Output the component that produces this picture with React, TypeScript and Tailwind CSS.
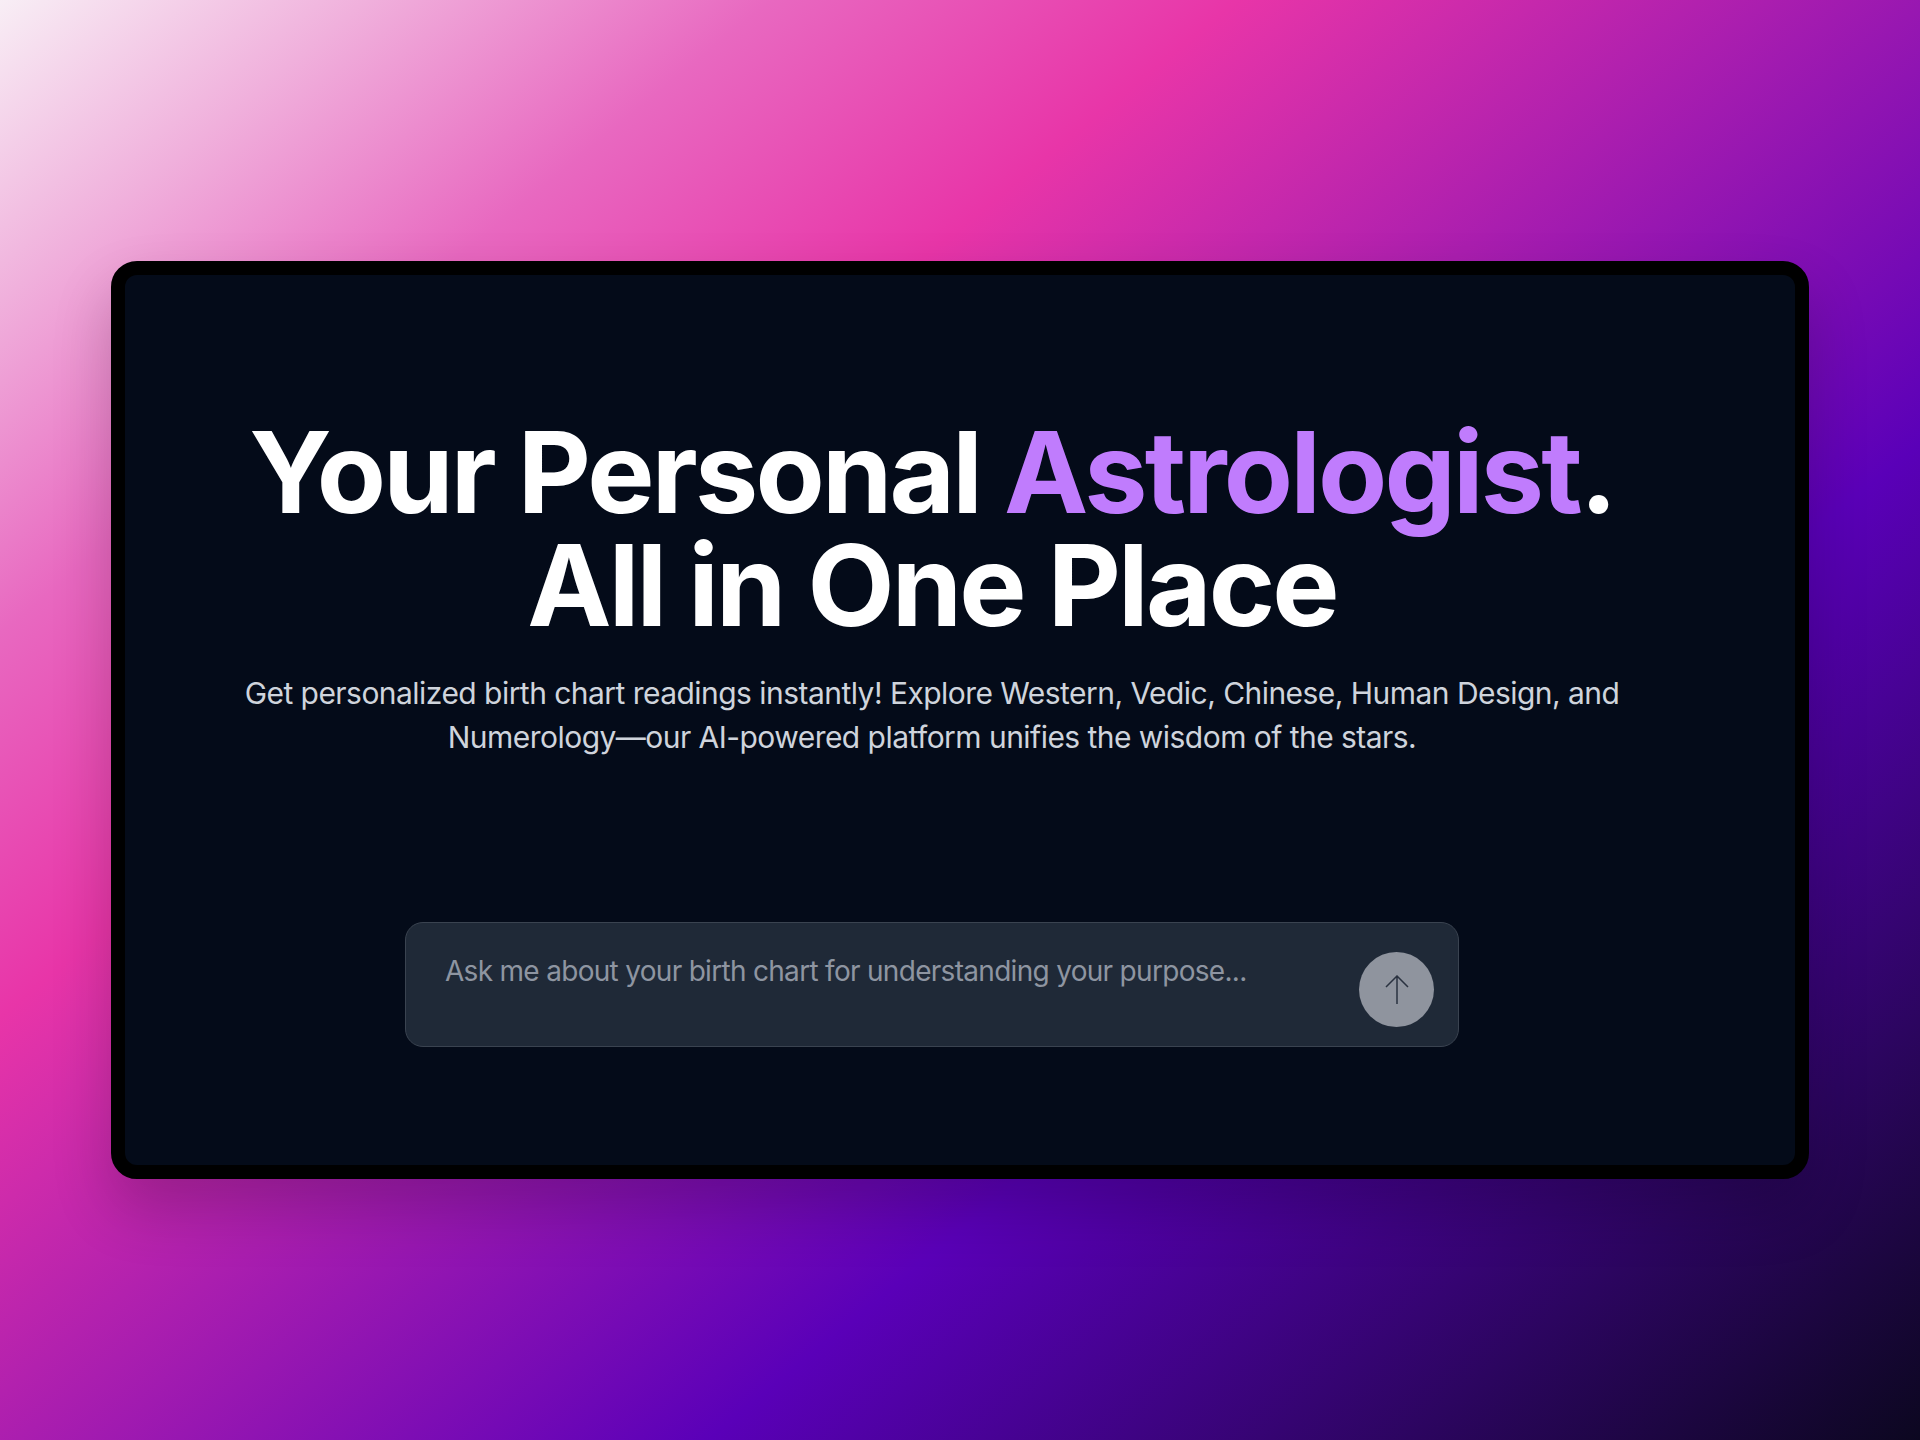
export default function App() {
  return (
    <div className="min-h-screen flex items-center justify-center bg-[linear-gradient(140.6deg,#f8eef5_0%,#f0b0dc_10%,#e868c0_21%,#e835a8_33.7%,#5a00b8_67%,#2c0560_86%,#0c0720_100%)] font-['Inter',sans-serif]">
      <div className="w-[1698px] h-[918px] rounded-[26px] border-[14px] border-black bg-[#040b19] shadow-[0_30px_60px_rgba(0,0,0,0.2)]">
        <div className="flex flex-col items-center pr-[56px] pt-[141px]">
          <h1 className="text-[113px] leading-[113px] font-[740] tracking-[-0.025em] text-white text-center">
            Your Personal <span className="text-[#c07cfd]">Astrologist</span>.
            <br />
            All in One Place
          </h1>
          <p className="mt-[29px] text-[30px] leading-[44px] tracking-[-0.018em] text-[#cfd4dc] text-center w-[1420px]">
            Get personalized birth chart readings instantly! Explore Western, Vedic, Chinese, Human Design, and Numerology—our AI-powered platform unifies the wisdom of the stars.
          </p>
          <div className="mt-[163px] w-[1054px] h-[125px] flex items-start rounded-[18px] border border-[#3a4350] bg-[#1f2937] pl-[39px] pr-[24px] pt-[29px]">
            <textarea
              rows={1}
              className="flex-1 mt-[1px] resize-none bg-transparent text-[28px] leading-[36px] tracking-[-0.025em] text-gray-200 placeholder:text-[#8e95a1] outline-none"
              placeholder="Ask me about your birth chart for understanding your purpose..."
            />
            <button className="w-[75px] h-[75px] shrink-0 rounded-full bg-[#8f949e] flex items-center justify-center">
              <svg width="24" height="29" viewBox="0 0 24 29" fill="none" stroke="#2a3240" strokeWidth="1.5">
                <path d="M12 1V29M1 12L12 1L23 12" />
              </svg>
            </button>
          </div>
        </div>
      </div>
    </div>
  );
}
